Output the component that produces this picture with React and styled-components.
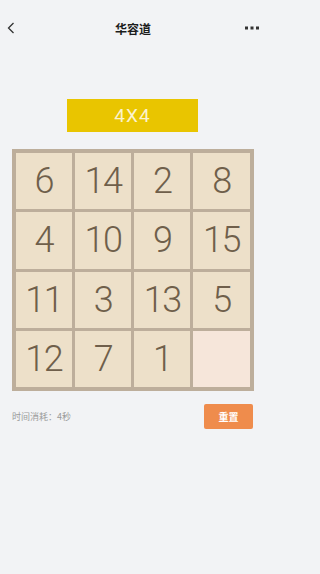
import React from "react";
import styled, { createGlobalStyle } from "styled-components";

const tiles = [6, 14, 2, 8, 4, 10, 9, 15, 11, 3, 13, 5, 12, 7, 1, null];

const GlobalStyle = createGlobalStyle`
  html, body {
    margin: 0;
    padding: 0;
    background: #f2f3f5;
    font-family: "Liberation Sans", "Noto Sans CJK SC", sans-serif;
  }
`;

const Page = styled.div`
  width: 265px;
  min-height: 574px;
  display: flex;
  flex-direction: column;
  align-items: center;
`;

const Header = styled.div`
  width: 100%;
  height: 56px;
  box-sizing: border-box;
  padding: 0 6px 0 7px;
  display: flex;
  align-items: center;
  justify-content: space-between;
`;

const Title = styled.h1`
  margin: 0;
  font-size: 12px;
  font-weight: 700;
  color: #1c1c1c;
  font-family: "Noto Sans CJK SC", sans-serif;
`;

const IconBtn = styled.div`
  width: 14px;
  height: 14px;
  display: flex;
  align-items: center;
  justify-content: ${(p) => (p.$right ? "flex-end" : "flex-start")};
`;

const Banner = styled.div`
  margin-top: 43px;
  width: 131px;
  height: 33px;
  background: #e9c500;
  color: #fbf3cf;
  font-family: Roboto, sans-serif;
  font-size: 19px;
  letter-spacing: 1px;
  display: flex;
  align-items: center;
  justify-content: center;
`;

const Board = styled.div`
  margin-top: 17px;
  width: 242px;
  height: 242px;
  box-sizing: border-box;
  padding: 4px;
  background: #bdae9b;
  display: grid;
  grid-template-columns: repeat(4, 1fr);
  grid-template-rows: repeat(4, 1fr);
  gap: 3px;
`;

const Tile = styled.div`
  background: ${(p) => (p.$empty ? "#f6e6da" : "#ede0c9")};
  color: #6f5f4b;
  font-family: Roboto, sans-serif;
  font-weight: 300;
  font-size: 36px;
  letter-spacing: -1.5px;
  display: flex;
  align-items: center;
  justify-content: center;
`;

const Footer = styled.div`
  margin-top: 13px;
  width: 100%;
  box-sizing: border-box;
  padding: 0 12px;
  display: flex;
  align-items: center;
  justify-content: space-between;
`;

const Elapsed = styled.span`
  font-size: 9px;
  color: #9b9b9b;
  font-family: "Noto Sans CJK SC", sans-serif;
`;

const ResetButton = styled.button`
  width: 49px;
  height: 25px;
  border: none;
  border-radius: 2px;
  background: #ef8c4c;
  color: #ffffff;
  font-size: 10px;
  font-weight: 700;
  font-family: "Noto Sans CJK SC", sans-serif;
  padding: 0;
`;

export default function App() {
  return (
    <>
      <GlobalStyle />
      <Page>
        <Header>
          <IconBtn>
            <svg width="8" height="12" viewBox="0 0 8 12">
              <path d="M6.5 1 L1.5 6 L6.5 11" fill="none" stroke="#333" strokeWidth="1.3" />
            </svg>
          </IconBtn>
          <Title>华容道</Title>
          <IconBtn $right>
            <svg width="14" height="4" viewBox="0 0 14 4">
              <rect x="0" y="0.5" width="3" height="3" fill="#333" />
              <rect x="5.5" y="0.5" width="3" height="3" fill="#333" />
              <rect x="11" y="0.5" width="3" height="3" fill="#333" />
            </svg>
          </IconBtn>
        </Header>
        <Banner>4X4</Banner>
        <Board>
          {tiles.map((n, i) => (
            <Tile key={i} $empty={n === null}>
              {n}
            </Tile>
          ))}
        </Board>
        <Footer>
          <Elapsed>时间消耗：4秒</Elapsed>
          <ResetButton>重置</ResetButton>
        </Footer>
      </Page>
    </>
  );
}
